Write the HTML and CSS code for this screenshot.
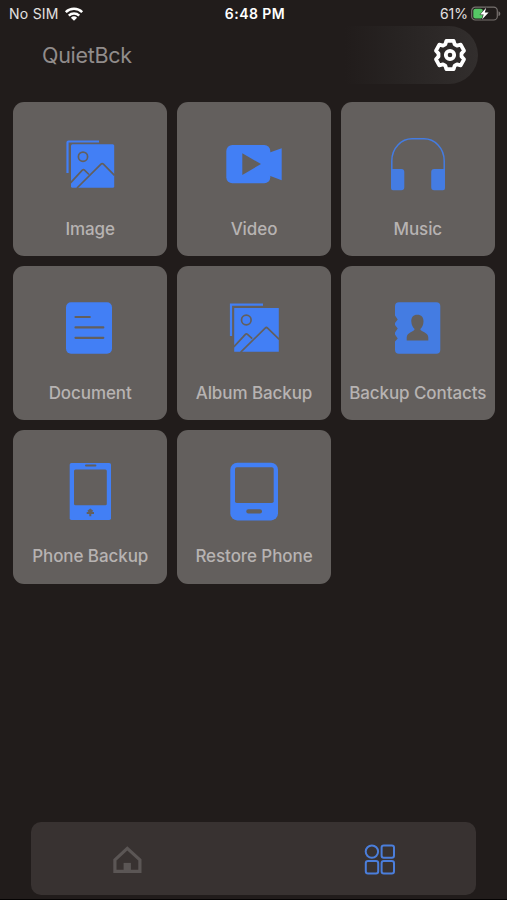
FILE: index.html
```html
<!DOCTYPE html>
<html lang="en">
<head>
<meta charset="utf-8">
<title>QuietBck</title>
<link rel="stylesheet" href="styles.css">
</head>
<body>
<div class="screen">
  <div class="status">
    <div class="carrier">
      <span class="network">No SIM</span>
      <svg class="wifi" width="20" height="16" viewBox="0 0 20 16" fill="none" stroke="#fff" stroke-width="2.5">
        <path d="M1.8 6.2a11.7 11.7 0 0 1 16.4 0"/>
        <path d="M4.8 9.6a7.6 7.6 0 0 1 10.4 0"/>
        <path d="M10 14.8 6.9 11.8a4.5 4.5 0 0 1 6.2 0z" fill="#fff" stroke="none"/>
      </svg>
    </div>
    <span class="time">6:48 PM</span>
    <div class="power">
      <span>61%</span>
      <svg width="30" height="16" viewBox="0 0 30 16">
        <rect x=".7" y="1.2" width="25.6" height="12.8" rx="3.6" fill="none" stroke="#77716f" stroke-width="1.2"/>
        <path d="M27.5 5.2c2.4.9 2.4 4 0 4.9z" fill="#77716f"/>
        <rect x="2.3" y="2.8" width="9.5" height="9.6" rx="2" fill="#55c765"/>
        <path d="M15.2 1.8 9.2 8.6h3.5L11 13.4l6.6-7h-3.8z" fill="#fff" stroke="#211c1b" stroke-width="1" paint-order="stroke"/>
      </svg>
    </div>
  </div>

  <header class="header">
    <h1 class="title">QuietBck</h1>
    <div class="settings">
      <svg width="36" height="36" viewBox="-18 -18 36 36" fill="none" stroke="#fff" stroke-width="3.8" stroke-linejoin="round">
        <path d="M-3.6-14.1H3.6L4.7-10.7 7-9.4 10.7-10.3 14-4.3 11.5-1.5V1.5L14 4.3 10.7 10.3 7 9.4 4.7 10.7 3.6 14.1H-3.6L-4.7 10.7-7 9.4-10.7 10.3-14 4.3-11.5 1.5V-1.5L-14-4.3-10.7-10.3-7-9.4-4.7-10.7Z"/>
        <circle r="4.2"/>
      </svg>
    </div>
  </header>

  <main class="grid">
    <div class="card">
      <svg class="icon" viewBox="37 20 80 80">
        <rect x="58" y="42.3" width="43.2" height="43.4" rx="1.5" fill="#427ff5"/>
        <path d="M54.5 71V40.5q0-1 1-1H86" fill="none" stroke="#427ff5" stroke-width="2.2"/>
        <g class="cut"><circle cx="70" cy="54.7" r="4.6"/><path d="M57.5 80.8 69.3 68.2q1.1-1 2.2 0L76 72.5M64 86 88 62.2q1.2-1.2 2.4 0L101.5 73.3"/></g>
      </svg>
      <span class="label">Image</span>
    </div>
    <div class="card">
      <svg class="icon" viewBox="37 20 80 80" fill="#427ff5">
        <rect x="49.3" y="43" width="44" height="38.3" rx="6"/>
        <path d="M92 50.7 104.7 46.3V78.2L92 73.5Z"/>
        <path d="M65.3 51.3 84 62 65.3 73Z" fill="#635f5d"/>
      </svg>
      <span class="label">Video</span>
    </div>
    <div class="card">
      <svg class="icon" viewBox="37 20 80 80" fill="#447ce2">
        <path d="M50.8 69V59C50.8 46 60.5 36.8 71 36.8H83C93.5 36.8 103.2 46 103.2 59V69" fill="none" stroke="#447ce2" stroke-width="1.5"/>
        <path d="M50 67H60.3a3 3 0 0 1 3 3V85.3a3 3 0 0 1-3 3H52a2 2 0 0 1-2-2ZM104 67H93.2a3 3 0 0 0-3 3V85.3a3 3 0 0 0 3 3H102a2 2 0 0 0 2-2Z"/>
      </svg>
      <span class="label">Music</span>
    </div>
    <div class="card">
      <svg class="icon" viewBox="37 20 80 80">
        <rect x="53" y="36.3" width="46" height="51.4" rx="5" fill="#427ff5"/>
        <path d="M62.5 51H76.8M62.5 61.4H90.3M62.5 71.8H90.3" stroke="#635f5d" stroke-width="2.2" stroke-linecap="round"/>
      </svg>
      <span class="label">Document</span>
    </div>
    <div class="card">
      <svg class="icon" viewBox="37 20 80 80">
        <rect x="57.2" y="42" width="44.6" height="43.8" rx=".5" fill="#427ff5"/>
        <path d="M54 70V38.6H86" fill="none" stroke="#427ff5" stroke-width="2.2"/>
        <g class="cut"><circle cx="69.3" cy="54" r="4.8"/><path d="M56.8 80.8 68.4 68.3q1-1 2.1 0L75.2 72.7M63.7 86.2 88.2 62.1q1.2-1.2 2.4 0L102.2 73.3"/></g>
      </svg>
      <span class="label">Album Backup</span>
    </div>
    <div class="card">
      <svg class="icon" viewBox="37 20 80 80">
        <path d="M58 36.3H95.3a4 4 0 0 1 4 4V83.7a4 4 0 0 1-4 4H58a4 4 0 0 1-4-4V75.5L56.7 72.5 54 68.5V66.5L56.7 62.5 54 59V57L56.7 53.5 54 49.5V40.3a4 4 0 0 1 4-4Z" fill="#447ce2"/>
        <path d="M76.3 48.7c-4 0-6.2 2.7-6 6.7.2 3.6 1.600 5.900 3.300 7.500 0 3-7.900 2.900-7.900 8.600V74.600H87.300V71.500c0-5.700-8-5.600-8-8.600 1.800-1.600 3.100-3.900 3.200-7.500.2-4-2.200-6.700-6.200-6.700Z" fill="#635f5d"/>
      </svg>
      <span class="label">Backup Contacts</span>
    </div>
    <div class="card">
      <svg class="icon" viewBox="37 20 80 80">
        <rect x="56.7" y="33" width="41.3" height="57" rx="1.8" fill="#427ff5"/>
        <g fill="#635f5d"><rect x="61" y="39.4" width="32.8" height="35.8" rx="1.5"/><rect x="72" y="34.6" width="11.4" height="2" rx="1"/></g>
        <path d="M77.3 79.5V86.3M73.7 83H81M75 81.5 77.3 79.7 79.6 81.5" fill="none" stroke="#635f5d" stroke-width="2"/>
      </svg>
      <span class="label">Phone Backup</span>
    </div>
    <div class="card">
      <svg class="icon" viewBox="37 20 80 80">
        <rect x="53.3" y="32.7" width="47.7" height="57.7" rx="7" fill="#427ff5"/>
        <g fill="#635f5d"><rect x="58" y="37.3" width="38.7" height="35.8" rx="1.8"/><rect x="69.3" y="79.2" width="15.7" height="4.3" rx="2"/></g>
      </svg>
      <span class="label">Restore Phone</span>
    </div>
  </main>

  <nav class="tabs">
    <svg class="home" width="32" height="32" viewBox="111.4 842.6 32 32" fill="none" stroke="#5b5655" stroke-width="3.2">
      <path d="M115.3 871V859.5L127.7 848 140.3 859.5V871Z"/>
      <path d="M124 862.5h7.3V871H124Z" fill="#5b5655" stroke="none"/>
    </svg>
    <svg class="apps" width="32" height="32" viewBox="364.4 842.6 32 32" fill="none" stroke="#4b7edb" stroke-width="2">
      <circle cx="372.3" cy="851.2" r="6.2"/>
      <rect x="382" y="845" width="12.4" height="12.4" rx="2.2"/>
      <rect x="366.2" y="860.6" width="12.4" height="12.4" rx="2.2"/>
      <rect x="382" y="860.6" width="12.4" height="12.4" rx="2.2"/>
    </svg>
  </nav>
</div>
</body>
</html>
```

FILE: styles.css
```css
* { box-sizing: border-box; }
body { margin: 0; background: #211c1b; }
.screen {
  width: 507px;
  height: 900px;
  display: flex;
  flex-direction: column;
  background: #211c1b;
  border-bottom: 1px solid #050303;
  font-family: Inter, "Liberation Sans", sans-serif;
  overflow: hidden;
}
.status {
  height: 25.5px;
  padding: 3px 6px 0 9px;
  display: grid;
  grid-template-columns: 1fr auto 1fr;
  align-items: center;
  font-size: 14px;
  line-height: 20px;
  color: #e4e1e0;
}
.carrier, .power { display: flex; align-items: center; gap: 5px; }
.network { letter-spacing: 0.25px; }
.power { justify-content: flex-end; gap: 3px; }
.time { font-weight: 600; letter-spacing: 0.45px; color: #fff; }
.header {
  height: 58.5px;
  padding: 0 29px 0 42px;
  display: flex;
  justify-content: space-between;
}
.title {
  margin: 0;
  font-size: 21.5px;
  font-weight: 400;
  line-height: 59px;
  letter-spacing: -0.3px;
  color: #918c8b;
}
.settings {
  width: 133px;
  height: 58.5px;
  padding-right: 10px;
  display: flex;
  align-items: center;
  justify-content: flex-end;
  border-radius: 0 29px 29px 0;
  background: linear-gradient(90deg, #211c1b 0%, #282423 45%, #322e2d 100%);
}
.grid {
  margin: 18.2px 12px 0 13.2px;
  display: grid;
  grid-template-columns: repeat(3, 154px);
  grid-auto-rows: 154px;
  gap: 9.7px 9.8px;
}
.card {
  padding-top: 20px;
  display: flex;
  flex-direction: column;
  align-items: center;
  border-radius: 11px;
  background: #635f5d;
}
.icon { width: 80px; height: 80px; flex: none; }
.cut { fill: none; stroke: #635f5d; stroke-width: 1.7px; }
.label {
  margin-top: 14.8px;
  font-size: 17px;
  font-weight: 500;
  line-height: 24px;
  letter-spacing: -0.08px;
  color: #b7b3b2;
  white-space: nowrap;
}
.tabs {
  width: 445px;
  height: 73px;
  margin: auto 0 4px 31.4px;
  padding: 0 80px;
  display: flex;
  align-items: center;
  justify-content: space-between;
  border-radius: 10px;
  background: #383231;
}
```
